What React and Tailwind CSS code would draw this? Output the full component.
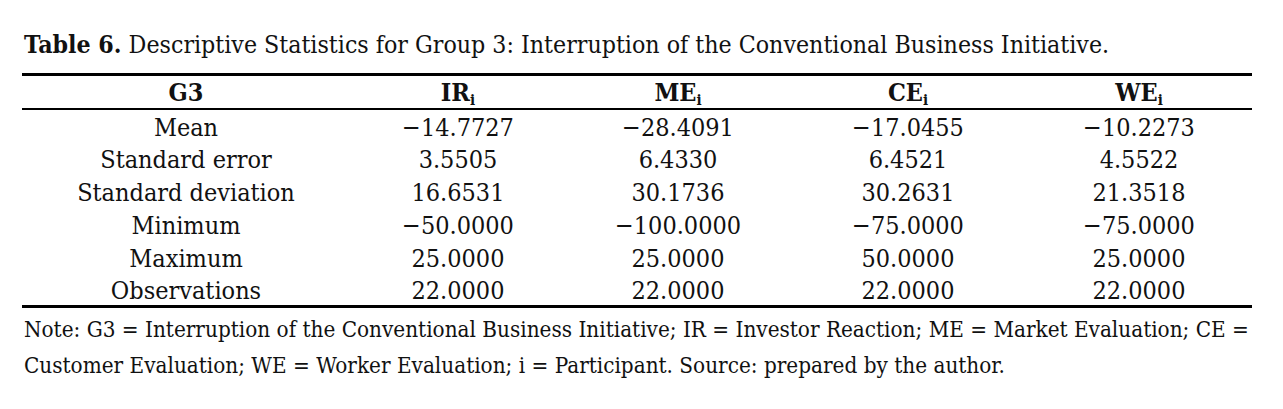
import React from 'react';

const rows = [
  ['Mean', '−14.7727', '−28.4091', '−17.0455', '−10.2273'],
  ['Standard error', '3.5505', '6.4330', '6.4521', '4.5522'],
  ['Standard deviation', '16.6531', '30.1736', '30.2631', '21.3518'],
  ['Minimum', '−50.0000', '−100.0000', '−75.0000', '−75.0000'],
  ['Maximum', '25.0000', '25.0000', '50.0000', '25.0000'],
  ['Observations', '22.0000', '22.0000', '22.0000', '22.0000'],
];

const heads = ['IR', 'ME', 'CE', 'WE'];

export default function App() {
  return (
    <div
      className="w-[1283px] h-[409px] bg-white text-[#111] pt-[27px] pl-[24px]"
      style={{ fontFamily: '"DejaVu Serif Condensed", "DejaVu Serif", serif' }}
    >
      <div className="text-[24.7px] leading-[36px] whitespace-nowrap">
        <span className="font-bold">Table 6.</span> Descriptive Statistics for Group 3: Interruption of the Conventional Business Initiative.
      </div>
      <table className="mt-[10px] w-[1230px] -ml-[2px] border-collapse text-[25px] table-fixed">
        <colgroup>
          <col className="w-[328px]" />
          <col className="w-[216px]" />
          <col className="w-[224px]" />
          <col className="w-[236px]" />
          <col className="w-[226px]" />
        </colgroup>
        <thead>
          <tr className="border-t-[3px] border-b-2 border-black h-[34px]">
            <th className="font-bold text-center leading-none pt-[2px]">G3</th>
            {heads.map((h) => (
              <th key={h} className="font-bold text-center leading-none pt-[2px]">
                {h}
                <sub className="text-[15px]">i</sub>
              </th>
            ))}
          </tr>
        </thead>
        <tbody className="border-b-[3px] border-black">
          {rows.map((r) => (
            <tr key={r[0]} className="h-[33px]">
              {r.map((c, i) => (
                <td key={i} className="text-center leading-none p-0 pt-[3px]">
                  {c}
                </td>
              ))}
            </tr>
          ))}
        </tbody>
      </table>
      <div className="text-[22.3px] leading-[36px] mt-[3px] whitespace-nowrap">
        Note: G3 = Interruption of the Conventional Business Initiative; IR = Investor Reaction; ME = Market Evaluation; CE =
        <br />
        Customer Evaluation; WE = Worker Evaluation; i = Participant. Source: prepared by the author.
      </div>
    </div>
  );
}
